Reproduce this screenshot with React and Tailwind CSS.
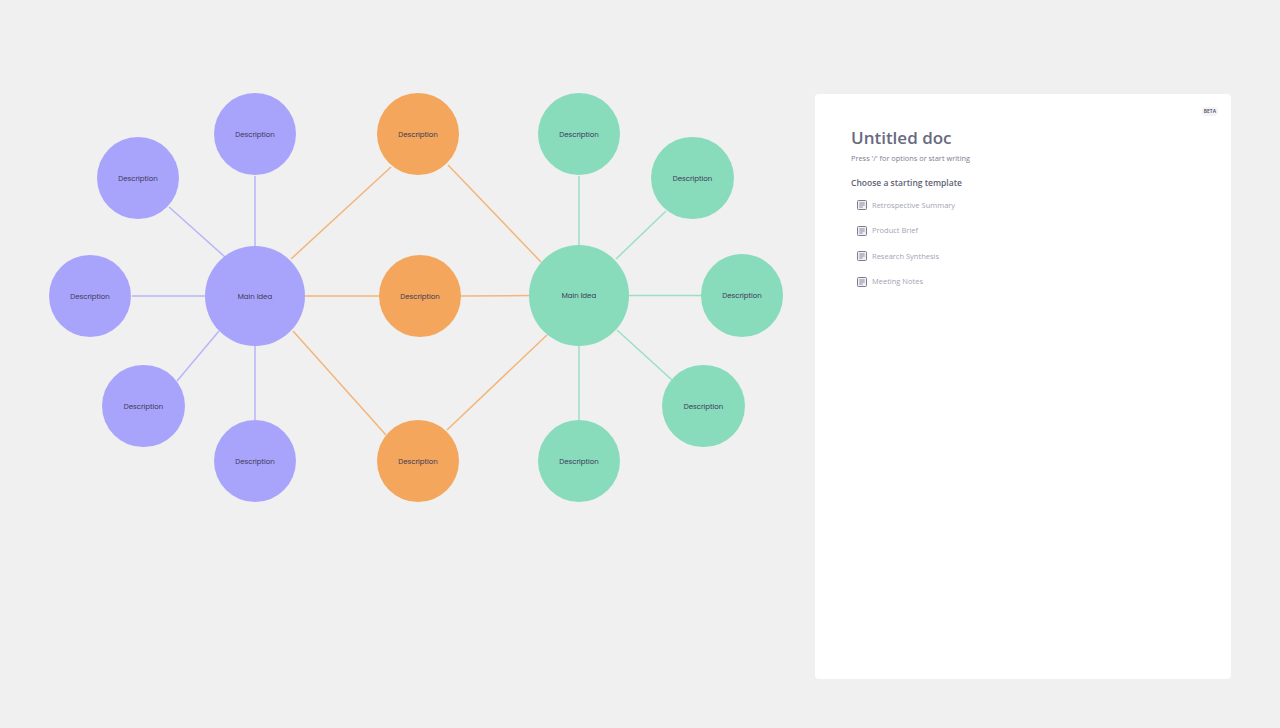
import React from 'react';

const PURPLE = '#b9b5fa';
const ORANGE = '#f4b57a';
const GREEN = '#9be0c5';

const nodes = [
  { x: 255, y: 296, r: 50.25, color: 'bg-[#a9a4fb]', label: 'Main Idea' },
  { x: 255, y: 134, r: 41.25, color: 'bg-[#a9a4fb]', label: 'Description' },
  { x: 138, y: 178, r: 41.25, color: 'bg-[#a9a4fb]', label: 'Description' },
  { x: 90, y: 296, r: 41.25, color: 'bg-[#a9a4fb]', label: 'Description' },
  { x: 143.5, y: 406, r: 41.25, color: 'bg-[#a9a4fb]', label: 'Description' },
  { x: 255, y: 461, r: 41.25, color: 'bg-[#a9a4fb]', label: 'Description' },
  { x: 418, y: 134, r: 41.25, color: 'bg-[#f3a65c]', label: 'Description' },
  { x: 420, y: 296, r: 41.25, color: 'bg-[#f3a65c]', label: 'Description' },
  { x: 418, y: 461, r: 41.25, color: 'bg-[#f3a65c]', label: 'Description' },
  { x: 579, y: 295.5, r: 50.25, color: 'bg-[#88dcbb]', label: 'Main Idea' },
  { x: 579, y: 134, r: 41.25, color: 'bg-[#88dcbb]', label: 'Description' },
  { x: 692.5, y: 178, r: 41.25, color: 'bg-[#88dcbb]', label: 'Description' },
  { x: 742, y: 295.5, r: 41.25, color: 'bg-[#88dcbb]', label: 'Description' },
  { x: 703.5, y: 406, r: 41.25, color: 'bg-[#88dcbb]', label: 'Description' },
  { x: 579, y: 461, r: 41.25, color: 'bg-[#88dcbb]', label: 'Description' },
];

const lines = [
  [255, 176, 255, 246, PURPLE],
  [169, 207, 225, 257, PURPLE],
  [132, 296, 205, 296, PURPLE],
  [177, 381, 219, 331, PURPLE],
  [255, 346, 255, 420, PURPLE],
  [291, 259, 391, 167, ORANGE],
  [305, 296, 379, 296, ORANGE],
  [293, 331, 386, 435, ORANGE],
  [448, 165, 541, 262, ORANGE],
  [461, 296, 529, 295.5, ORANGE],
  [447, 430, 547, 335, ORANGE],
  [579, 176, 579, 245, GREEN],
  [616, 259, 666, 211, GREEN],
  [629, 295.5, 701, 295.5, GREEN],
  [617, 330, 672, 380, GREEN],
  [579, 346, 579, 420, GREEN],
];

const templates = ['Retrospective Summary', 'Product Brief', 'Research Synthesis', 'Meeting Notes'];

const DocIcon = () => (
  <svg width="10" height="10" viewBox="0 0 10 10" fill="none" className="shrink-0">
    <rect x="0.5" y="0.5" width="9" height="9" rx="1" fill="#f0f0f4" stroke="#7b7c90" strokeWidth="1" />
    <path d="M2.3 3h5.4M2.3 5h5.4M2.3 7h3.4" stroke="#7b7c90" strokeWidth="0.9" />
  </svg>
);

const Diagram = () => (
  <div className="relative w-[815px] h-[728px] shrink-0">
    <svg width="815" height="728" className="absolute left-0 top-0">
      {lines.map(([x1, y1, x2, y2, color], i) => (
        <line key={i} x1={x1} y1={y1} x2={x2} y2={y2} stroke={color} strokeWidth="1.5" />
      ))}
    </svg>
    {nodes.map((node, i) => (
      <div
        key={i}
        className={`absolute flex items-center justify-center rounded-full pt-[2px] text-[7px] text-[#3a3a58] font-['Poppins','Lato',sans-serif] ${node.color}`}
        style={{ left: node.x - node.r, top: node.y - node.r, width: node.r * 2, height: node.r * 2 }}
      >
        {node.label}
      </div>
    ))}
  </div>
);

export default function App() {
  return (
    <div className="flex w-[1280px] h-[728px] overflow-hidden bg-[#f0f0f0] font-['Open_Sans',sans-serif]">
      <Diagram />
      <div className="relative w-[416px] h-[585px] mt-[94px] rounded bg-white pl-9 pt-[33px]">
        <span className="absolute right-[13px] top-[13px] rounded-sm bg-[#f3f3f6] px-[2px] py-px text-[5px] leading-[7px] font-semibold text-[#45455c]">
          BETA
        </span>
        <h1 className="text-[17px] leading-[21px] font-semibold text-[#686a80]">Untitled doc</h1>
        <p className="mt-[4px] text-[7.4px] leading-[12px] text-[#7d7e92]">Press '/' for options or start writing</p>
        <h2 className="mt-[12px] text-[8.5px] leading-[14px] font-semibold text-[#5e5f75]">Choose a starting template</h2>
        <ul className="mt-[2.5px] flex flex-col pl-[6px]">
          {templates.map((name) => (
            <li key={name} className="flex h-[25.5px] items-center gap-[5px] text-[7.5px] text-[#a3a4b5]">
              <DocIcon />
              {name}
            </li>
          ))}
        </ul>
      </div>
    </div>
  );
}
